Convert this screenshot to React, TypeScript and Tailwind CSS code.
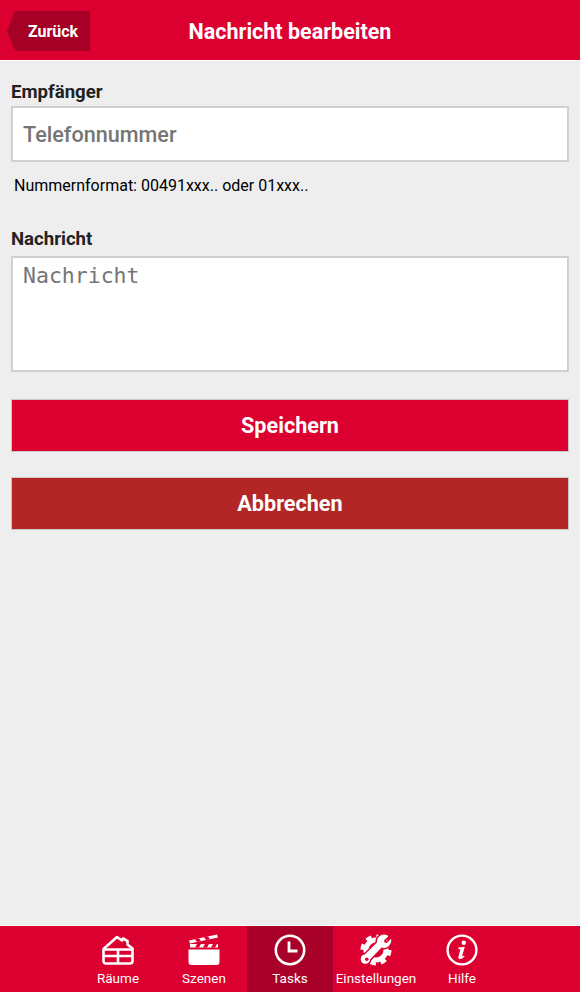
const roboto = { fontFamily: "Roboto, sans-serif" };

function HouseIcon() {
  return (
    <svg width="32" height="30" viewBox="0 0 32 30" fill="none" stroke="white" strokeWidth="2.6" strokeLinejoin="round">
      <path d="M1.5 14 L15 2 L20 5.5 L21 3.5 L25.5 6 L25.5 9.5 L30.5 13.5 V26 Q30.5 28.5 28 28.5 H4 Q1.5 28.5 1.5 26 Z" />
      <path d="M1.5 14.5 H30.5 M1.5 21 H30.5 M16 14.5 V28.5" />
    </svg>
  );
}

function ClapperIcon() {
  return (
    <svg width="32" height="32" viewBox="0 0 32 32" fill="white">
      <path d="M0.5 15.5 H31.5 V28 Q31.5 31 28.5 31 H3.5 Q0.5 31 0.5 28 Z" />
      <path d="M2 10 H30 V13.5 H2 Z" />
      <path d="M9 10 H13 L11 13.5 H7 Z M17 10 H21 L19 13.5 H15 Z M25 10 H29 L27 13.5 H23 Z" fill="#de0030" />
      <path d="M1 6.5 L29 0.5 L30 3.5 L2 9.5 Z" />
      <path d="M7 5.2 L11 4.3 L13 7.2 L9 8.1 Z M16 3.2 L20 2.3 L22 5.2 L18 6.1 Z" fill="#de0030" />
    </svg>
  );
}

function ClockIcon() {
  return (
    <svg width="32" height="32" viewBox="0 0 32 32" fill="none" stroke="white">
      <circle cx="16" cy="16" r="14.2" strokeWidth="2.6" />
      <path d="M15 7.5 V17 H23.5" strokeWidth="2.8" />
    </svg>
  );
}

function ToolsIcon() {
  return (
    <svg width="32" height="32" viewBox="0 0 32 32" fill="none">
      <circle cx="16" cy="16" r="10" stroke="white" strokeWidth="5" />
      <circle cx="16" cy="16" r="13.5" stroke="white" strokeWidth="4" strokeDasharray="5.6 5" />
      <path
        fill="white"
        stroke="#de0030"
        strokeWidth="3"
        paintOrder="stroke"
        d="M28.5 2 L24 6.4 L24.6 8.4 L26.8 9 L31 4.8 A7.2 7.2 0 0 1 21.6 13.4 L10 25.6 A4.6 4.6 0 1 1 4.8 20.6 L17 8.6 A7.2 7.2 0 0 1 28.5 2 Z"
      />
      <circle cx="6.8" cy="25.2" r="1.8" fill="#de0030" />
    </svg>
  );
}

function InfoIcon() {
  return (
    <svg width="32" height="32" viewBox="0 0 32 32" fill="none">
      <circle cx="16" cy="16" r="14.4" stroke="white" strokeWidth="2.4" />
      <circle cx="17.8" cy="8.8" r="2.2" fill="white" />
      <path
        fill="white"
        d="M12.5 13.6 L18.8 12.8 L16.2 21.8 Q15.9 23.2 17.8 21.6 L18.6 22.4 Q16 25.2 13.6 25 Q11.8 24.7 12.6 22 L14.4 15.6 L12.4 15 Z"
      />
    </svg>
  );
}

function NavItem({ label, icon, active }: { label: string; icon: React.ReactNode; active?: boolean }) {
  return (
    <div className={`w-[86px] h-full flex flex-col items-center pt-[8px] ${active ? "bg-[#a80028]" : ""}`}>
      <div className="h-[32px] flex items-center justify-center">{icon}</div>
      <span className="mt-[3px] text-[13.5px] leading-[18px] text-white whitespace-nowrap">{label}</span>
    </div>
  );
}

export default function App() {
  return (
    <div className="h-[992px] flex flex-col bg-[#eeeeee]" style={roboto}>
      <header className="relative h-[61px] shrink-0 bg-[#dc0030] border-b border-white flex items-center justify-center">
        <button className="absolute left-[7px] top-[11px] w-[83px] h-[40px] bg-[#a50026] text-white font-bold text-[16px] pl-[9px] pt-[2px] [clip-path:polygon(8px_0,100%_0,100%_100%,8px_100%,0_50%)]">
          Zurück
        </button>
        <h1 className="text-white font-bold text-[21.5px] pt-[5px]">Nachricht bearbeiten</h1>
      </header>

      <main className="flex-1 px-[11px] pt-[19px]">
        <label className="block text-[18.6px] leading-[24px] font-bold text-[#222222]">Empfänger</label>
        <div className="mt-[2px] h-[56px] bg-white border-2 border-[#d0d0d0] flex items-center px-[10px] pt-[3px] text-[21.6px] font-medium text-[#757575]">
          Telefonnummer
        </div>
        <p className="mt-[14px] ml-[3px] text-[16px] leading-[20px] text-black">Nummernformat: 00491xxx.. oder 01xxx..</p>

        <label className="block mt-[31px] text-[18.6px] leading-[24px] font-bold text-[#222222]">Nachricht</label>
        <div
          className="mt-[5px] h-[116px] bg-white border-2 border-[#d0d0d0] px-[10px] pt-[3px] text-[21.5px] leading-[30px] text-[#757575]"
          style={{ fontFamily: '"DejaVu Sans Mono", monospace' }}
        >
          Nachricht
        </div>

        <button className="mt-[27px] block w-full h-[53px] bg-[#dc0030] border border-[#c8c8c8] text-white font-bold text-[21.6px] pt-[1px]">
          Speichern
        </button>
        <button className="mt-[25px] block w-full h-[53px] bg-[#b32626] border border-[#c8c8c8] text-white font-bold text-[21.6px] pt-[1px]">
          Abbrechen
        </button>
      </main>

      <nav className="h-[67px] shrink-0 bg-[#dc0030] border-t border-white flex justify-center">
        <NavItem label="Räume" icon={<HouseIcon />} />
        <NavItem label="Szenen" icon={<ClapperIcon />} />
        <NavItem label="Tasks" icon={<ClockIcon />} active />
        <NavItem label="Einstellungen" icon={<ToolsIcon />} />
        <NavItem label="Hilfe" icon={<InfoIcon />} />
      </nav>
    </div>
  );
}
